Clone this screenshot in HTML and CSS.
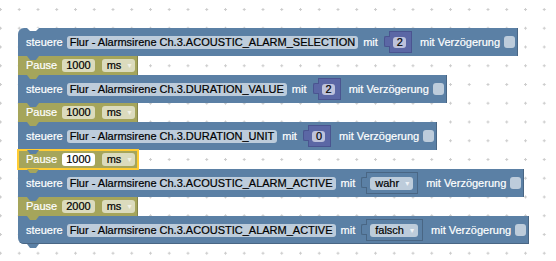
FILE: index.html
```html
<!DOCTYPE html>
<html>
<head>
<meta charset="utf-8">
<title>Blockly - Alarmsirene</title>
<link rel="stylesheet" href="styles.css">
</head>
<body>
<div class="workspace">
  <svg class="grid" width="556" height="261">
    <defs>
      <pattern id="dots" width="18.75" height="18.75" patternUnits="userSpaceOnUse" x="-1" y="8">
        <rect x="0" y="1" width="3" height="1" fill="#ccc"/>
        <rect x="1" y="0" width="1" height="3" fill="#ccc"/>
      </pattern>
    </defs>
    <rect width="100%" height="100%" fill="url(#dots)"/>
  </svg>

  <div class="stack">
    <!-- steuere -->
    <div class="blk act first">
      <span>steuere</span>
      <span class="fld obj">Flur - Alarmsirene Ch.3.ACOUSTIC_ALARM_SELECTION</span>
      <span>mit</span>
      <span class="val num"><span class="fld">2</span></span>
      <span>mit Verzögerung</span>
      <span class="chk"></span>
    </div>
    <div class="blk wait">
      <span>Pause</span>
      <span class="fld edit">1000</span>
      <span class="fld drop">ms <i>▾</i></span>
    </div>

    <div class="blk act">
      <span>steuere</span>
      <span class="fld obj">Flur - Alarmsirene Ch.3.DURATION_VALUE</span>
      <span>mit</span>
      <span class="val num"><span class="fld">2</span></span>
      <span>mit Verzögerung</span>
      <span class="chk"></span>
    </div>
    <div class="blk wait">
      <span>Pause</span>
      <span class="fld edit">1000</span>
      <span class="fld drop">ms <i>▾</i></span>
    </div>

    <div class="blk act">
      <span>steuere</span>
      <span class="fld obj">Flur - Alarmsirene Ch.3.DURATION_UNIT</span>
      <span>mit</span>
      <span class="val num"><span class="fld">0</span></span>
      <span>mit Verzögerung</span>
      <span class="chk"></span>
    </div>
    <div class="blk wait sel">
      <span>Pause</span>
      <span class="fld edit">1000</span>
      <span class="fld drop">ms <i>▾</i></span>
    </div>

    <div class="blk act">
      <span>steuere</span>
      <span class="fld obj">Flur - Alarmsirene Ch.3.ACOUSTIC_ALARM_ACTIVE</span>
      <span>mit</span>
      <span class="val bool"><span class="fld drop">wahr <i>▾</i></span></span>
      <span>mit Verzögerung</span>
      <span class="chk"></span>
    </div>
    <div class="blk wait">
      <span>Pause</span>
      <span class="fld edit">2000</span>
      <span class="fld drop">ms <i>▾</i></span>
    </div>

    <div class="blk act last">
      <span>steuere</span>
      <span class="fld obj">Flur - Alarmsirene Ch.3.ACOUSTIC_ALARM_ACTIVE</span>
      <span>mit</span>
      <span class="val bool"><span class="fld drop">falsch <i>▾</i></span></span>
      <span>mit Verzögerung</span>
      <span class="chk"></span>
    </div>
  </div>
</div>
</body>
</html>
```

FILE: styles.css
```css
BODY {
	margin		: 0;
	background	: white;
	font-family	: "Liberation Sans", Arial, sans-serif;
	font-size	: 11px;
}
.workspace {
	position	: relative;
	width		: 556px;
	height		: 261px;
	overflow	: hidden;
}
.grid {
	position	: absolute;
	left		: 0;
	top		: 0;
}
.stack {
	position	: relative;
	display		: flex;
	flex-direction	: column;
	align-items	: flex-start;
	padding		: 28px 0 0 18px;
}

/* blocks */
.blk {
	position	: relative;
	display		: flex;
	align-items	: center;
	gap		: 4px;
	padding		: 0 3px 0 8px;
	color		: #fff;
	white-space	: nowrap;
	line-height	: 13px;
	-webkit-text-stroke: 0.2px currentColor;
}
.blk::after {
	content		: "";
	position	: absolute;
	left		: 9px;
	bottom		: -4px;
	width		: 12px;
	height		: 4px;
	background	: inherit;
	clip-path	: polygon(0 0, 100% 0, 75% 100%, 25% 100%);
	z-index		: 3;
}
.act {
	height		: 28px;
	background	: #5b80a5;
	box-shadow	: inset -1px 0 0 #496684;
}
.wait {
	height		: 19px;
	background	: #a5a55b;
	box-shadow	: inset -1px 0 0 #84844a;
}
.first { border-top-left-radius: 6px; }
.first::before {
	content		: "";
	position	: absolute;
	left		: 9px;
	top		: 0;
	width		: 12px;
	height		: 3px;
	background	: #fff;
	clip-path	: polygon(0 0, 100% 0, 75% 100%, 25% 100%);
}
.last {
	border-bottom-left-radius: 6px;
	box-shadow	: inset -1px -1px 0 #496684;
}
.sel {
	z-index		: 2;
	outline		: 2px solid #fc3;
	outline-offset	: -1px;
}

/* fields */
.fld {
	display		: inline-block;
	height		: 13px;
	padding		: 0 3px;
	border-radius	: 3px;
	color		: #000;
	background	: #bdccdb;
}
.fld.obj { margin-right: 1px; }
.wait .fld { background: #dbdbbd; }
.wait .fld.edit { padding: 0 4px; margin-left: 1px; margin-right: 3px; }
.sel .fld.edit { background: #fff; }
.fld.drop { padding: 0 4px 0 5px; }
.fld.drop I {
	font-style	: normal;
	font-size	: 8px;
	color		: #f2f2e6;
	margin-left	: 3px;
	font-family	: "DejaVu Sans", sans-serif;
	vertical-align	: 1px;
	-webkit-text-stroke: 0;
}
.act .fld.drop I { color: #eef2f6; }

/* plugged value blocks */
.val {
	position	: relative;
	display		: inline-flex;
	align-items	: center;
	height		: 20px;
	margin		: 0 4px 0 7px;
	border		: 1px solid;
}
.val::before {
	content		: "";
	position	: absolute;
	left		: -6px;
	top		: 4px;
	width		: 5px;
	height		: 9px;
	background	: inherit;
	border		: 1px solid;
	border-color	: inherit;
	border-right	: 0;
	border-radius	: 2px 0 0 2px;
}
.num {
	padding		: 0 5px 0 3px;
	background	: #5b67a5;
	border-color	: #4a5490;
}
.num .fld {
	height		: 11px;
	line-height	: 11px;
	padding		: 0 3px 0 4px;
	background	: #bdc2db;
}
.bool {
	padding		: 0 4px 0 3px;
	background	: #5b80a5;
	border-color	: #496684;
}
.chk {
	display		: inline-block;
	width		: 11px;
	height		: 12px;
	border-radius	: 3px;
	background	: #bdccdb;
}
```
